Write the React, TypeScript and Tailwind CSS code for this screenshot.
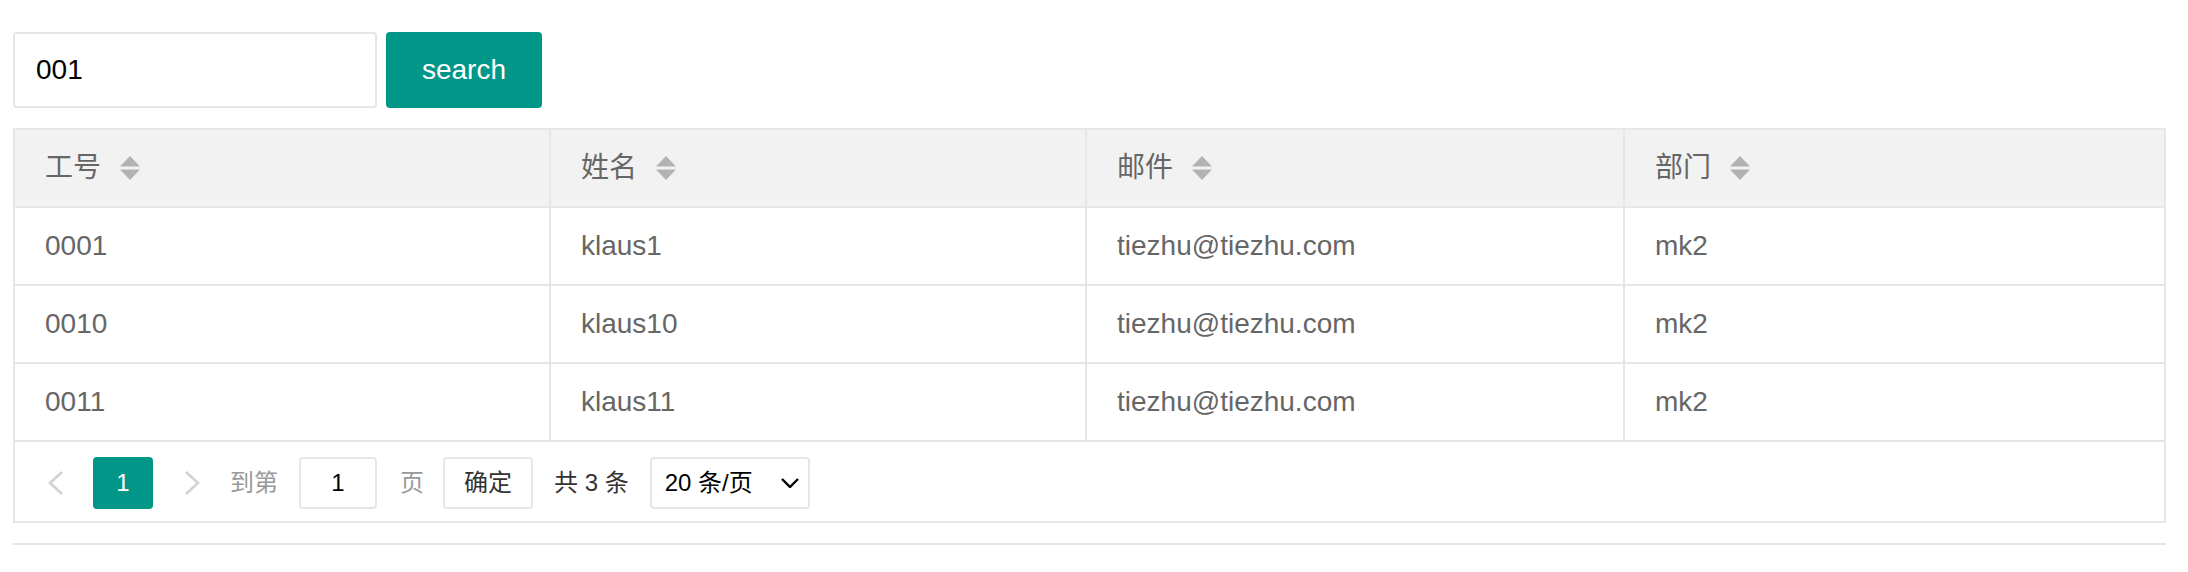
import React from 'react';

const rows = [
    { id: '0001', name: 'klaus1', email: 'tiezhu@tiezhu.com', dept: 'mk2' },
    { id: '0010', name: 'klaus10', email: 'tiezhu@tiezhu.com', dept: 'mk2' },
    { id: '0011', name: 'klaus11', email: 'tiezhu@tiezhu.com', dept: 'mk2' },
];

const columns = ['工号', '姓名', '邮件', '部门'];

function SortIcon() {
    return (
        <svg width="20" height="24" viewBox="0 0 20 24" className="ml-[19px] shrink-0">
            <polygon points="10,0 20,10.5 0,10.5" fill="#b2b2b2" />
            <polygon points="0,13.5 20,13.5 10,24" fill="#b2b2b2" />
        </svg>
    );
}

function Chevron({ dir }: { dir: 'left' | 'right' }) {
    return (
        <svg width="16" height="24" viewBox="0 0 16 24">
            <polyline
                points={dir === 'left' ? '14,1 2,12 14,23' : '2,1 14,12 2,23'}
                fill="none"
                stroke="#d2d2d2"
                strokeWidth="2.6"
            />
        </svg>
    );
}

export default function App() {
    return (
        <div className="min-h-screen bg-white pl-[13px] pr-[22px] pt-[32px] font-['Liberation_Sans','Noto_Sans_CJK_SC',sans-serif]">
            {/* search bar */}
            <div className="flex items-center gap-[9px]">
                <input
                    defaultValue="001"
                    className="w-[364px] h-[76px] border-2 border-[#e6e6e6] rounded-[4px] pl-[21px] text-[28px] text-black outline-none"
                />
                <button className="w-[156px] h-[76px] bg-[#009688] rounded-[4px] text-white text-[28px]">
                    search
                </button>
            </div>

            {/* table */}
            <div className="mt-[20px] border-2 border-[#e6e6e6]">
                <div className="grid grid-cols-[534px_536px_538px_1fr] h-[78px] bg-[#f2f2f2] border-b-2 border-[#e6e6e6] text-[#666] text-[28px]">
                    {columns.map((c, i) => (
                        <div
                            key={c}
                            className={`flex items-center px-[30px] ${i > 0 ? 'border-l-2 border-[#e6e6e6]' : ''}`}
                        >
                            <span>{c}</span>
                            <SortIcon />
                        </div>
                    ))}
                </div>
                {rows.map((r) => (
                    <div
                        key={r.id}
                        className="grid grid-cols-[534px_536px_538px_1fr] h-[78px] border-b-2 border-[#e6e6e6] text-[#666] text-[28px]"
                    >
                        <div className="flex items-center px-[30px]">{r.id}</div>
                        <div className="flex items-center px-[30px] border-l-2 border-[#e6e6e6]">{r.name}</div>
                        <div className="flex items-center px-[30px] border-l-2 border-[#e6e6e6]">{r.email}</div>
                        <div className="flex items-center px-[30px] border-l-2 border-[#e6e6e6]">{r.dept}</div>
                    </div>
                ))}

                {/* pagination */}
                <div className="flex items-center pt-[15px] pb-[12px] text-[24px]">
                    <div className="ml-[15px] w-[52px] h-[52px] flex items-center justify-center">
                        <Chevron dir="left" />
                    </div>
                    <div className="ml-[11px] w-[60px] h-[52px] flex items-center justify-center bg-[#009688] rounded-[4px] text-white">
                        1
                    </div>
                    <div className="ml-[13px] w-[52px] h-[52px] flex items-center justify-center">
                        <Chevron dir="right" />
                    </div>
                    <span className="ml-[12px] text-[#999]">到第</span>
                    <div className="ml-[21px] w-[78px] h-[52px] flex items-center justify-center border-2 border-[#e6e6e6] rounded-[4px] text-black">
                        1
                    </div>
                    <span className="ml-[23px] text-[#999]">页</span>
                    <button className="ml-[19px] w-[90px] h-[52px] border-2 border-[#e6e6e6] rounded-[4px] text-[#333]">
                        确定
                    </button>
                    <span className="ml-[21px] text-[#333]">共 3 条</span>
                    <div className="ml-[21px] w-[160px] h-[52px] flex items-center justify-between pl-[13px] pr-[9px] border-2 border-[#e6e6e6] rounded-[4px] text-black">
                        <span>20 条/页</span>
                        <svg width="18" height="10" viewBox="0 0 18 10">
                            <polyline points="1,1 9,9 17,1" fill="none" stroke="#000" strokeWidth="2.4" />
                        </svg>
                    </div>
                </div>
            </div>

            <div className="mt-[20px] border-t-2 border-[#e6e6e6]" />
        </div>
    );
}
